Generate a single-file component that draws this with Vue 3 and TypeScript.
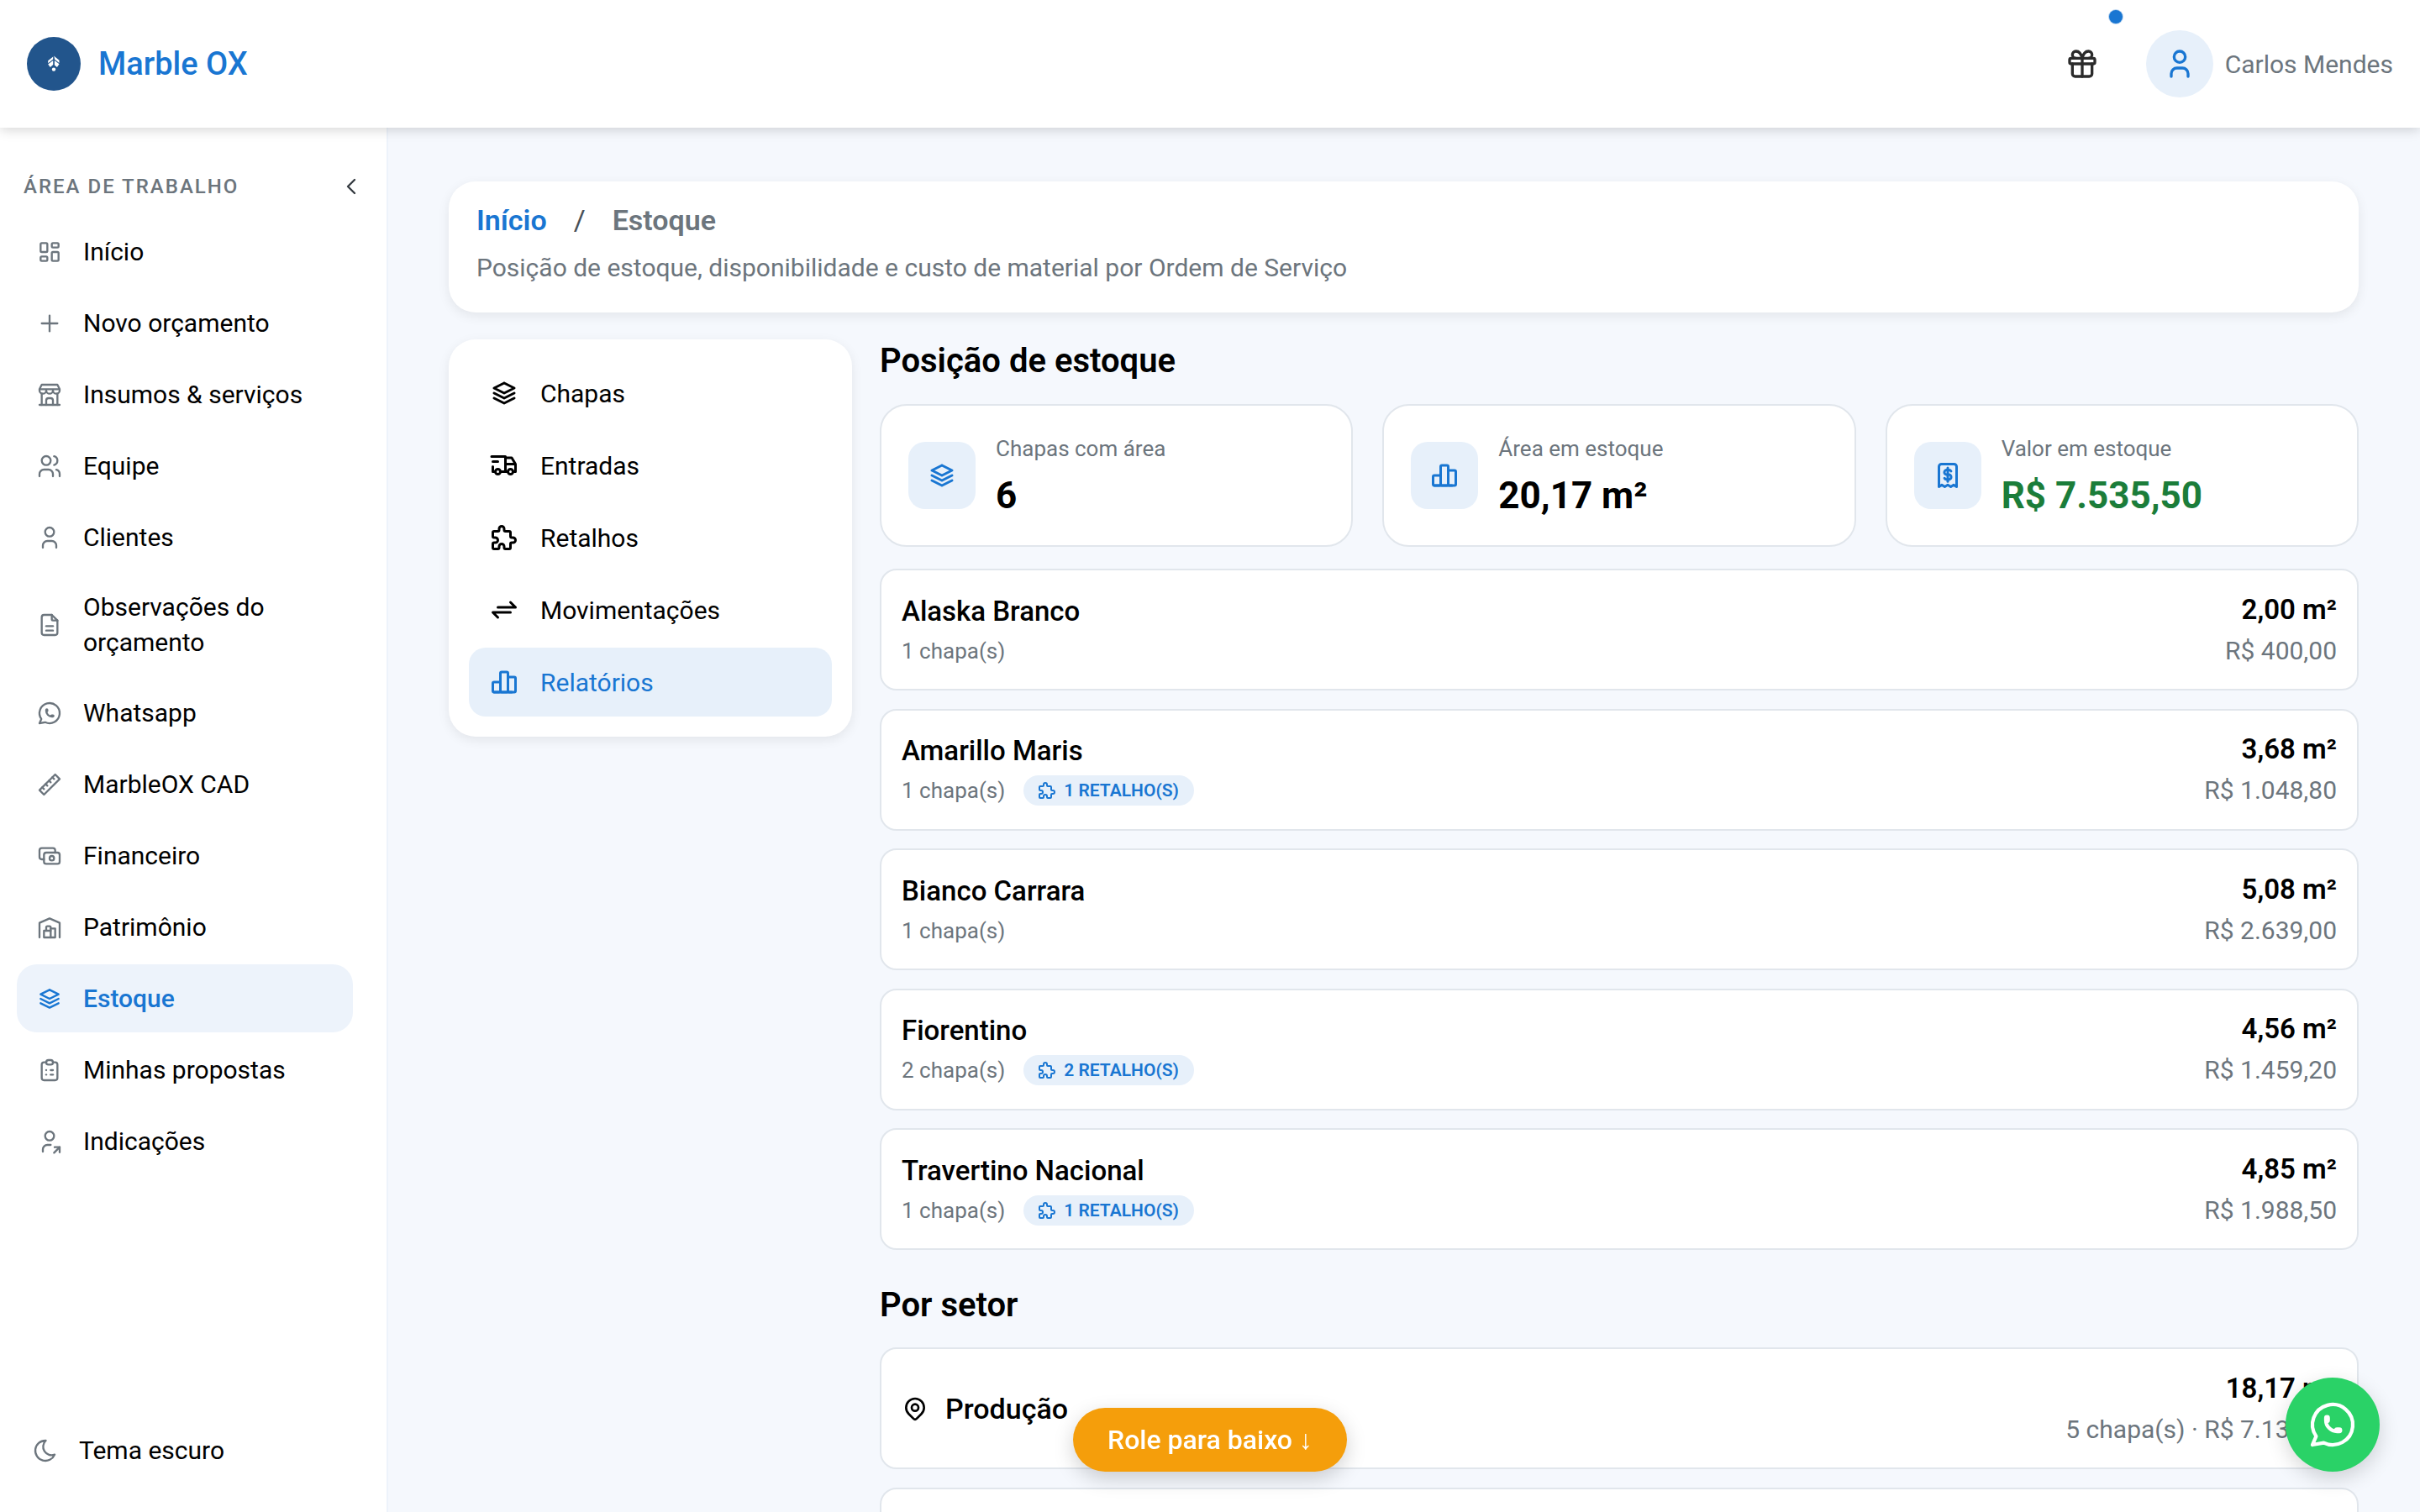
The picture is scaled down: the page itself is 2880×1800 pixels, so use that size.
<template>
  <div class="app">
    <header class="topbar">
      <div class="brand">
        <span class="brand-logo">
          <svg viewBox="0 0 24 24" width="24" height="24" fill="#fff">
            <path d="M12 2.5l6.5 5.2v3.3l-5.6-4.4v-1.6zM11.2 6.6l-6 4.6v-2.9l6-4.7zM5.2 12.5l6-4.6v5.2l-3.4 3zM12.9 7.9l5.6 4.4-2.6 3.8-3-2.7z" />
            <circle cx="12" cy="18.6" r="2.2" />
          </svg>
        </span>
        <span class="brand-name">Marble OX</span>
      </div>
      <div class="topbar-right">
        <button class="gift">
          <svg class="ico" viewBox="0 0 24 24" width="40" height="40" stroke-width="2">
            <path v-for="d in icons.gift" :key="d" :d="d" />
          </svg>
          <span class="gift-dot"></span>
        </button>
        <span class="avatar">
          <svg class="ico" viewBox="0 0 24 24" width="40" height="40" stroke-width="2">
            <path v-for="d in icons.user" :key="d" :d="d" />
          </svg>
        </span>
        <span class="user-name">Carlos Mendes</span>
      </div>
    </header>

    <div class="body">
      <aside class="sidebar">
        <div class="side-title">
          <span>ÁREA DE TRABALHO</span>
          <svg class="ico" viewBox="0 0 24 24" width="32" height="32" stroke-width="1.75">
            <path v-for="d in icons.chevron" :key="d" :d="d" />
          </svg>
        </div>
        <nav class="side-nav">
          <a
            v-for="item in navItems"
            :key="item.label"
            class="nav-item"
            :class="{ active: item.active }"
          >
            <svg class="ico nav-ico" viewBox="0 0 24 24" width="32" height="32" stroke-width="1.75">
              <path v-for="d in icons[item.icon]" :key="d" :d="d" />
            </svg>
            <span>{{ item.label }}</span>
          </a>
        </nav>
        <div class="theme-toggle">
          <svg class="ico nav-ico" viewBox="0 0 24 24" width="32" height="32" stroke-width="1.75">
            <path v-for="d in icons.moon" :key="d" :d="d" />
          </svg>
          <span>Tema escuro</span>
        </div>
      </aside>

      <main class="main">
        <section class="crumb-card">
          <div class="crumbs">
            <span class="crumb-link">Início</span>
            <span class="crumb-sep">/</span>
            <span class="crumb-now">Estoque</span>
          </div>
          <p class="crumb-desc">Posição de estoque, disponibilidade e custo de material por Ordem de Serviço</p>
        </section>

        <div class="columns">
          <div class="sub-menu">
            <a
              v-for="item in subItems"
              :key="item.label"
              class="sub-item"
              :class="{ active: item.active }"
            >
              <svg class="ico" viewBox="0 0 24 24" width="36" height="36" stroke-width="2">
                <path v-for="d in icons[item.icon]" :key="d" :d="d" />
              </svg>
              <span>{{ item.label }}</span>
            </a>
          </div>

          <div class="content">
            <h2 class="section-title">Posição de estoque</h2>
            <div class="kpis">
              <div v-for="kpi in kpis" :key="kpi.label" class="kpi">
                <span class="kpi-icon">
                  <svg class="ico" viewBox="0 0 24 24" width="36" height="36" stroke-width="2">
                    <path v-for="d in icons[kpi.icon]" :key="d" :d="d" />
                  </svg>
                </span>
                <div>
                  <div class="kpi-label">{{ kpi.label }}</div>
                  <div class="kpi-value" :class="{ green: kpi.green }">{{ kpi.value }}</div>
                </div>
              </div>
            </div>

            <div class="rows">
              <div v-for="row in materials" :key="row.name" class="row">
                <div>
                  <div class="row-name">{{ row.name }}</div>
                  <div class="row-sub">
                    <span>{{ row.count }}</span>
                    <span v-if="row.scraps" class="badge">
                      <svg class="ico" viewBox="0 0 24 24" width="24" height="24" stroke-width="2">
                        <path v-for="d in icons.puzzle" :key="d" :d="d" />
                      </svg>
                      {{ row.scraps }}
                    </span>
                  </div>
                </div>
                <div class="row-right">
                  <div class="row-area">{{ row.area }}</div>
                  <div class="row-price">{{ row.price }}</div>
                </div>
              </div>
            </div>

            <h2 class="section-title sector-title">Por setor</h2>
            <div class="rows">
              <div class="row">
                <div class="sector-name">
                  <svg class="ico" viewBox="0 0 24 24" width="32" height="32" stroke-width="2">
                    <path v-for="d in icons.pin" :key="d" :d="d" />
                  </svg>
                  <span>Produção</span>
                </div>
                <div class="row-right">
                  <div class="row-area">18,17 m²</div>
                  <div class="row-price">5 chapa(s) · R$ 7.135,50</div>
                </div>
              </div>
              <div class="row"></div>
            </div>
          </div>
        </div>
      </main>
    </div>

    <button class="scroll-hint">Role para baixo ↓</button>
    <button class="wa-fab">
      <svg class="ico" viewBox="0 0 24 24" width="64" height="64" stroke-width="1.6">
        <path v-for="d in icons.whatsapp" :key="d" :d="d" />
      </svg>
    </button>
  </div>
</template>

<script setup lang="ts">
const icons: Record<string, string[]> = {
  chevron: ['M15 6l-6 6l6 6'],
  gift: [
    'M3 9a1 1 0 0 1 1 -1h16a1 1 0 0 1 1 1v2a1 1 0 0 1 -1 1h-16a1 1 0 0 1 -1 -1z',
    'M12 8l0 13',
    'M19 12v7a2 2 0 0 1 -2 2h-10a2 2 0 0 1 -2 -2v-7',
    'M7.5 8a2.5 2.5 0 0 1 0 -5a4.8 8 0 0 1 4.5 5a4.8 8 0 0 1 4.5 -5a2.5 2.5 0 0 1 0 5',
  ],
  user: ['M8 7a4 4 0 1 0 8 0a4 4 0 0 0 -8 0', 'M6 21v-2a4 4 0 0 1 4 -4h4a4 4 0 0 1 4 4v2'],
  dashboard: [
    'M5 4h4a1 1 0 0 1 1 1v6a1 1 0 0 1 -1 1h-4a1 1 0 0 1 -1 -1v-6a1 1 0 0 1 1 -1',
    'M5 16h4a1 1 0 0 1 1 1v2a1 1 0 0 1 -1 1h-4a1 1 0 0 1 -1 -1v-2a1 1 0 0 1 1 -1',
    'M15 12h4a1 1 0 0 1 1 1v6a1 1 0 0 1 -1 1h-4a1 1 0 0 1 -1 -1v-6a1 1 0 0 1 1 -1',
    'M15 4h4a1 1 0 0 1 1 1v2a1 1 0 0 1 -1 1h-4a1 1 0 0 1 -1 -1v-2a1 1 0 0 1 1 -1',
  ],
  plus: ['M12 5l0 14', 'M5 12l14 0'],
  store: [
    'M3 21l18 0',
    'M3 7v1a3 3 0 0 0 6 0v-1m0 1a3 3 0 0 0 6 0v-1m0 1a3 3 0 0 0 6 0v-1h-18l2 -4h14l2 4',
    'M5 21l0 -10.15',
    'M19 21l0 -10.15',
    'M9 21v-4a2 2 0 0 1 2 -2h2a2 2 0 0 1 2 2v4',
  ],
  users: [
    'M5 7a4 4 0 1 0 8 0a4 4 0 1 0 -8 0',
    'M3 21v-2a4 4 0 0 1 4 -4h4a4 4 0 0 1 4 4v2',
    'M16 3.13a4 4 0 0 1 0 7.75',
    'M21 21v-2a4 4 0 0 0 -3 -3.85',
  ],
  file: [
    'M14 3v4a1 1 0 0 0 1 1h4',
    'M17 21h-10a2 2 0 0 1 -2 -2v-14a2 2 0 0 1 2 -2h7l5 5v11a2 2 0 0 1 -2 2z',
    'M9 17h6',
    'M9 13h6',
  ],
  whatsapp: [
    'M3 21l1.65 -3.8a9 9 0 1 1 3.4 2.9l-5.05 .9',
    'M9 10a.5 .5 0 0 0 1 0v-1a.5 .5 0 0 0 -1 0v1a5 5 0 0 0 5 5h1a.5 .5 0 0 0 0 -1h-1a.5 .5 0 0 0 0 1',
  ],
  ruler: [
    'M17 3l4 4l-14 14l-4 -4z',
    'M16 7l-1.5 -1.5',
    'M13 10l-1.5 -1.5',
    'M10 13l-1.5 -1.5',
    'M7 16l-1.5 -1.5',
  ],
  cash: [
    'M7 11a2 2 0 0 1 2 -2h10a2 2 0 0 1 2 2v6a2 2 0 0 1 -2 2h-10a2 2 0 0 1 -2 -2z',
    'M12 14a2 2 0 1 0 4 0a2 2 0 1 0 -4 0',
    'M17 9v-2a2 2 0 0 0 -2 -2h-10a2 2 0 0 0 -2 2v6a2 2 0 0 0 2 2h2',
  ],
  warehouse: [
    'M3 21v-13l9 -4l9 4v13',
    'M13 13h4v8h-10v-6h6',
    'M13 21v-9a1 1 0 0 0 -1 -1h-2a1 1 0 0 0 -1 1v3',
  ],
  stack: ['M12 4l-8 4l8 4l8 -4l-8 -4', 'M4 12l8 4l8 -4', 'M4 16l8 4l8 -4'],
  clipboard: [
    'M9 5h-2a2 2 0 0 0 -2 2v12a2 2 0 0 0 2 2h10a2 2 0 0 0 2 -2v-12a2 2 0 0 0 -2 -2h-2',
    'M9 5a2 2 0 0 1 2 -2h2a2 2 0 0 1 2 2a2 2 0 0 1 -2 2h-2a2 2 0 0 1 -2 -2z',
    'M9 12l.01 0',
    'M13 12l2 0',
    'M9 16l.01 0',
    'M13 16l2 0',
  ],
  share: [
    'M8 7a4 4 0 1 0 8 0a4 4 0 0 0 -8 0',
    'M6 21v-2a4 4 0 0 1 4 -4h3',
    'M16 22l5 -5',
    'M21 21.5v-4.5h-4.5',
  ],
  moon: ['M12 3c.132 0 .263 0 .393 0a7.5 7.5 0 0 0 7.92 12.446a9 9 0 1 1 -8.313 -12.454z'],
  truck: [
    'M5 17a2 2 0 1 0 4 0a2 2 0 1 0 -4 0',
    'M15 17a2 2 0 1 0 4 0a2 2 0 1 0 -4 0',
    'M5 17h-2v-4m-1 -8h11v12m-4 0h6m4 0h2v-6h-8m0 -5h5l3 5',
    'M3 9l4 0',
  ],
  puzzle: [
    'M4 7h3a1 1 0 0 0 1 -1v-1a2 2 0 0 1 4 0v1a1 1 0 0 0 1 1h3a1 1 0 0 1 1 1v3a1 1 0 0 0 1 1h1a2 2 0 0 1 0 4h-1a1 1 0 0 0 -1 1v3a1 1 0 0 1 -1 1h-3a1 1 0 0 1 -1 -1v-1a2 2 0 0 0 -4 0v1a1 1 0 0 1 -1 1h-3a1 1 0 0 1 -1 -1v-3a1 1 0 0 1 1 -1h1a2 2 0 0 0 0 -4h-1a1 1 0 0 1 -1 -1v-3a1 1 0 0 1 1 -1',
  ],
  exchange: ['M7 10h14l-4 -4', 'M17 14h-14l4 4'],
  chart: [
    'M3 13a1 1 0 0 1 1 -1h4a1 1 0 0 1 1 1v6a1 1 0 0 1 -1 1h-4a1 1 0 0 1 -1 -1z',
    'M15 9a1 1 0 0 1 1 -1h4a1 1 0 0 1 1 1v10a1 1 0 0 1 -1 1h-4a1 1 0 0 1 -1 -1z',
    'M9 5a1 1 0 0 1 1 -1h4a1 1 0 0 1 1 1v14a1 1 0 0 1 -1 1h-4a1 1 0 0 1 -1 -1z',
    'M4 20h14',
  ],
  receipt: [
    'M5 21v-16a2 2 0 0 1 2 -2h10a2 2 0 0 1 2 2v16l-2.3 -1.5l-2.3 1.5l-2.4 -1.5l-2.4 1.5l-2.3 -1.5z',
    'M14.6 8.6a2 1.6 0 0 0 -1.8 -1h-1.6a1.9 1.9 0 0 0 0 3.8h1.6a1.9 1.9 0 0 1 0 3.8h-1.6a2 1.6 0 0 1 -1.8 -1',
    'M12 6v10.8',
  ],
  pin: [
    'M9 11a3 3 0 1 0 6 0a3 3 0 0 0 -6 0',
    'M17.657 16.657l-4.243 4.243a2 2 0 0 1 -2.827 0l-4.244 -4.243a8 8 0 1 1 11.314 0z',
  ],
}

const navItems = [
  { label: 'Início', icon: 'dashboard' },
  { label: 'Novo orçamento', icon: 'plus' },
  { label: 'Insumos & serviços', icon: 'store' },
  { label: 'Equipe', icon: 'users' },
  { label: 'Clientes', icon: 'user' },
  { label: 'Observações do orçamento', icon: 'file' },
  { label: 'Whatsapp', icon: 'whatsapp' },
  { label: 'MarbleOX CAD', icon: 'ruler' },
  { label: 'Financeiro', icon: 'cash' },
  { label: 'Patrimônio', icon: 'warehouse' },
  { label: 'Estoque', icon: 'stack', active: true },
  { label: 'Minhas propostas', icon: 'clipboard' },
  { label: 'Indicações', icon: 'share' },
]

const subItems = [
  { label: 'Chapas', icon: 'stack' },
  { label: 'Entradas', icon: 'truck' },
  { label: 'Retalhos', icon: 'puzzle' },
  { label: 'Movimentações', icon: 'exchange' },
  { label: 'Relatórios', icon: 'chart', active: true },
]

const kpis = [
  { label: 'Chapas com área', value: '6', icon: 'stack' },
  { label: 'Área em estoque', value: '20,17 m²', icon: 'chart' },
  { label: 'Valor em estoque', value: 'R$ 7.535,50', icon: 'receipt', green: true },
]

const materials = [
  { name: 'Alaska Branco', count: '1 chapa(s)', area: '2,00 m²', price: 'R$ 400,00' },
  { name: 'Amarillo Maris', count: '1 chapa(s)', scraps: '1 RETALHO(S)', area: '3,68 m²', price: 'R$ 1.048,80' },
  { name: 'Bianco Carrara', count: '1 chapa(s)', area: '5,08 m²', price: 'R$ 2.639,00' },
  { name: 'Fiorentino', count: '2 chapa(s)', scraps: '2 RETALHO(S)', area: '4,56 m²', price: 'R$ 1.459,20' },
  { name: 'Travertino Nacional', count: '1 chapa(s)', scraps: '1 RETALHO(S)', area: '4,85 m²', price: 'R$ 1.988,50' },
]
</script>

<style>
html,
body {
  margin: 0;
  height: 100%;
  overflow: hidden;
}
</style>

<style scoped>
.app {
  height: 100vh;
  display: flex;
  flex-direction: column;
  overflow: hidden;
  background: #f5f8fd;
  font-family: Roboto, "Liberation Sans", sans-serif;
  color: #000;
}

.ico {
  flex: none;
  fill: none;
  stroke: currentColor;
  stroke-linecap: round;
  stroke-linejoin: round;
}

.topbar {
  height: 152px;
  flex: none;
  display: flex;
  align-items: center;
  justify-content: space-between;
  padding: 0 32px;
  background: #fff;
  box-shadow: 0 2px 14px rgba(0, 0, 0, 0.18);
  position: relative;
  z-index: 2;
}

.brand {
  display: flex;
  align-items: center;
  gap: 21px;
}

.brand-logo {
  width: 64px;
  height: 64px;
  border-radius: 50%;
  background: #22558c;
  display: flex;
  align-items: center;
  justify-content: center;
}

.brand-name {
  font-size: 38px;
  font-weight: 500;
  color: #1976d2;
}

.topbar-right {
  display: flex;
  align-items: center;
}

.gift {
  position: relative;
  display: flex;
  padding: 0;
  margin-right: 56px;
  border: none;
  background: none;
  color: #2b2b2b;
}

.gift-dot {
  position: absolute;
  top: -44px;
  right: -28px;
  width: 16px;
  height: 16px;
  border-radius: 50%;
  background: #1976d2;
  box-shadow: 0 0 0 1px #bcd6f0;
}

.avatar {
  width: 80px;
  height: 80px;
  border-radius: 50%;
  background: #e7f0fa;
  color: #1976d2;
  display: flex;
  align-items: center;
  justify-content: center;
  margin-right: 14px;
}

.user-name {
  font-size: 30px;
  color: #6c757d;
}

.body {
  flex: 1;
  min-height: 0;
  display: flex;
}

.sidebar {
  width: 462px;
  flex: none;
  box-sizing: border-box;
  background: #fff;
  border-right: 2px solid #edf3fb;
  display: flex;
  flex-direction: column;
  padding: 0 40px 52px 20px;
}

.side-title {
  display: flex;
  align-items: center;
  justify-content: space-between;
  padding: 52px 0 20px 8px;
  margin-right: -14px;
  height: 35px;
  font-size: 24px;
  font-weight: 500;
  letter-spacing: 2px;
  color: #6c757d;
}

.side-title .ico {
  color: #343a40;
}

.side-nav {
  display: flex;
  flex-direction: column;
  gap: 4px;
}

.nav-item {
  display: flex;
  align-items: center;
  gap: 24px;
  min-height: 81px;
  box-sizing: border-box;
  padding: 18px 23px;
  border-radius: 24px;
  font-size: 30px;
  line-height: 42px;
}

.nav-ico {
  color: #6c757d;
}

.nav-item.active {
  background: #edf3fb;
  color: #1976d2;
  font-weight: 500;
}

.nav-item.active .nav-ico {
  color: #1976d2;
}

.theme-toggle {
  margin-top: auto;
  display: flex;
  align-items: center;
  gap: 24px;
  padding-left: 18px;
  font-size: 30px;
  line-height: 42px;
}

.main {
  flex: 1;
  min-width: 0;
  padding: 64px 73px 0 72px;
}

.crumb-card {
  height: 156px;
  box-sizing: border-box;
  padding: 24px 33px;
  background: #fff;
  border-radius: 32px;
  box-shadow: 0 4px 14px rgba(0, 0, 0, 0.08);
}

.crumbs {
  display: flex;
  gap: 32px;
  font-size: 34px;
  font-weight: 600;
  line-height: 44px;
}

.crumb-link {
  color: #1976d2;
}

.crumb-sep {
  font-weight: 400;
  color: #495057;
}

.crumb-now {
  color: #6c757d;
}

.crumb-desc {
  margin: 14px 0 0;
  font-size: 30px;
  line-height: 42px;
  color: #6c757d;
}

.columns {
  display: flex;
  align-items: flex-start;
  gap: 33px;
  margin-top: 32px;
}

.sub-menu {
  width: 480px;
  flex: none;
  box-sizing: border-box;
  padding: 23px 24px 24px;
  display: flex;
  flex-direction: column;
  gap: 4px;
  background: #fff;
  border-radius: 32px;
  box-shadow: 0 4px 14px rgba(0, 0, 0, 0.08);
}

.sub-item {
  height: 82px;
  display: flex;
  align-items: center;
  gap: 25px;
  padding: 0 24px;
  border-radius: 20px;
  font-size: 30px;
}

.sub-item.active {
  background: #e7f0fa;
  color: #1976d2;
}

.content {
  flex: 1;
  min-width: 0;
}

.section-title {
  margin: 0 0 25px;
  font-size: 40px;
  line-height: 52px;
  font-weight: 600;
}

.kpis {
  display: grid;
  grid-template-columns: repeat(3, 1fr);
  gap: 35px;
  margin-bottom: 26px;
}

.kpi {
  height: 170px;
  box-sizing: border-box;
  display: flex;
  align-items: center;
  gap: 24px;
  padding: 0 32px;
  background: #fff;
  border: 2px solid #e1e6ec;
  border-radius: 32px;
}

.kpi-icon {
  width: 80px;
  height: 80px;
  flex: none;
  border-radius: 20px;
  background: #e7f0fa;
  color: #1976d2;
  display: flex;
  align-items: center;
  justify-content: center;
}

.kpi-label {
  font-size: 26px;
  line-height: 36px;
  color: #6c757d;
}

.kpi-value {
  margin-top: 12px;
  font-size: 44px;
  line-height: 52px;
  font-weight: 700;
}

.kpi-value.green {
  color: #1b7d3a;
}

.rows {
  display: flex;
  flex-direction: column;
  gap: 21.5px;
}

.row {
  height: 145px;
  flex: none;
  box-sizing: border-box;
  display: flex;
  align-items: center;
  justify-content: space-between;
  padding: 0 24px;
  background: #fff;
  border: 2px solid #e1e6ec;
  border-radius: 20px;
}

.row-name {
  font-size: 33px;
  line-height: 44px;
  font-weight: 500;
}

.row-sub {
  display: flex;
  align-items: center;
  gap: 22px;
  margin-top: 6px;
  height: 38px;
  font-size: 26px;
  color: #6c757d;
}

.badge {
  display: flex;
  align-items: center;
  gap: 8px;
  height: 36px;
  padding: 0 18px 0 16px;
  border-radius: 18px;
  background: #e7f0fa;
  color: #1976d2;
  font-size: 21px;
  font-weight: 600;
}

.row-right {
  text-align: right;
}

.row-area {
  font-size: 33px;
  line-height: 44px;
  font-weight: 600;
}

.row-price {
  margin-top: 6px;
  font-size: 30px;
  line-height: 42px;
  color: #6c757d;
}

.sector-title {
  margin: 40px 0 24px;
}

.sector-name {
  display: flex;
  align-items: center;
  gap: 20px;
  font-size: 34px;
  font-weight: 500;
}

.scroll-hint {
  position: fixed;
  left: 1277px;
  bottom: 48px;
  width: 326px;
  height: 76px;
  border: none;
  border-radius: 38px;
  background: #f59e0b;
  color: #fff;
  font-family: inherit;
  font-size: 32px;
  font-weight: 500;
  box-shadow: 0 8px 24px rgba(0, 0, 0, 0.18);
  z-index: 3;
}

.wa-fab {
  position: fixed;
  right: 48px;
  bottom: 48px;
  width: 112px;
  height: 112px;
  border: none;
  border-radius: 50%;
  padding: 0;
  background: #2ad267;
  color: #fff;
  display: flex;
  align-items: center;
  justify-content: center;
  box-shadow: 0 8px 24px rgba(0, 0, 0, 0.16);
  z-index: 3;
}
</style>
